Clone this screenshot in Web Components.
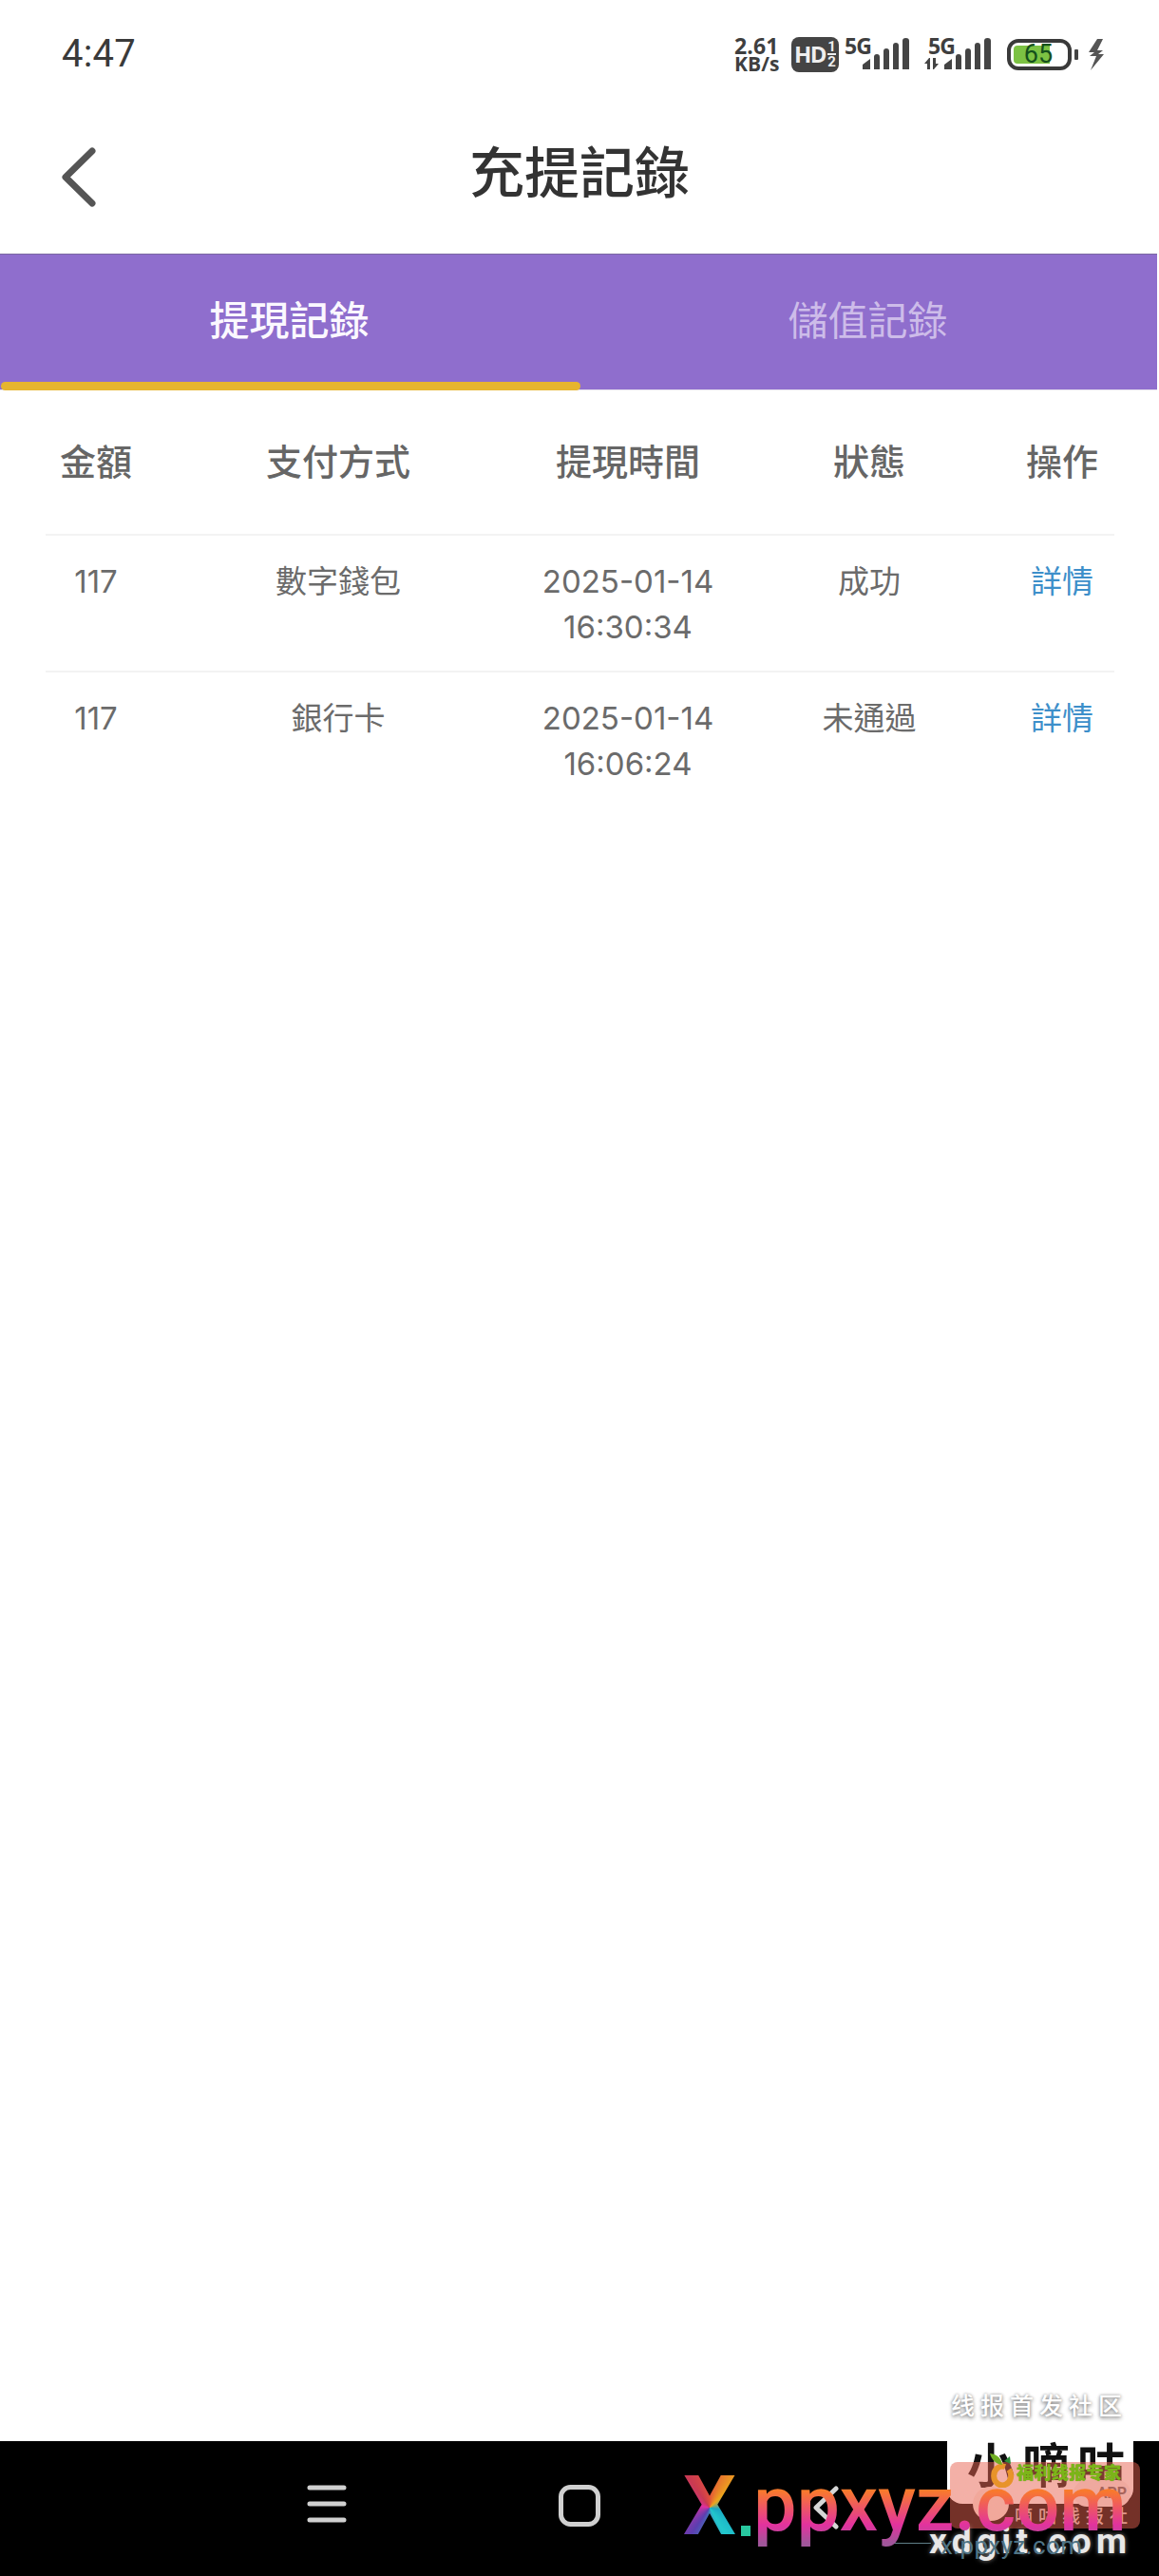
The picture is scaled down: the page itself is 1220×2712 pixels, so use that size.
<!DOCTYPE html>
<html lang="zh-Hant">
<head>
<meta charset="utf-8">
<title>充提記錄</title>
<style>
html,body{margin:0;padding:0;background:#fff;}
body{width:1220px;height:2712px;overflow:hidden;font-family:Roboto,"Noto Sans CJK TC",sans-serif;}
</style>
</head>
<body>
<app-shell>
  <status-bar slot="status" time="4:47"></status-bar>
  <app-header slot="header" title-text="充提記錄"></app-header>
  <tab-bar slot="tabs">
    <tab-item active>提現記錄</tab-item>
    <tab-item>儲值記錄</tab-item>
  </tab-bar>
  <record-table slot="main">
    <record-row header><span>金額</span><span>支付方式</span><span>提現時間</span><span>狀態</span><span>操作</span></record-row>
    <record-row><span>117</span><span>數字錢包</span><span>2025-01-14<br>16:30:34</span><span>成功</span><span data-link>詳情</span></record-row>
    <record-row><span>117</span><span>銀行卡</span><span>2025-01-14<br>16:06:24</span><span>未通過</span><span data-link>詳情</span></record-row>
  </record-table>
  <nav-bar slot="nav"></nav-bar>
  <water-mark slot="overlay"></water-mark>
</app-shell>
<script>
const FONT='Roboto,"Noto Sans CJK TC",sans-serif';
function def(name,html,init){
  customElements.define(name,class extends HTMLElement{
    constructor(){super();const s=this.attachShadow({mode:'open'});s.innerHTML=typeof html==='function'?html(this):html;}
    connectedCallback(){if(init)init(this);}
  });
}
def('app-shell',`<style>
:host{display:flex;flex-direction:column;position:relative;width:1220px;height:2712px;overflow:hidden;background:#fff;font-family:${FONT};}
.main{flex:1;min-height:0;}
</style>
<slot name="status"></slot><slot name="header"></slot><slot name="tabs"></slot>
<div class="main"><slot name="main"></slot></div>
<slot name="nav"></slot><slot name="overlay"></slot>`);

def('signal-icon',el=>`<style>
:host{display:block;position:relative;width:${el.hasAttribute('arrows')?71:69}px;height:36px;}
.g{position:absolute;left:${el.hasAttribute('arrows')?4:0}px;top:-3px;font:700 23px/24px "Open Sans",Roboto,sans-serif;color:#3f3f3f;letter-spacing:-.8px;}
svg{position:absolute;left:0;top:0;}
</style><span class="g">5G</span>
<svg width="${el.hasAttribute('arrows')?71:69}" height="36" viewBox="0 0 ${el.hasAttribute('arrows')?71:69} 36" fill="#444">
${el.hasAttribute('arrows')?
`<path d="M0 28l5-6 1 0 0 12h-3l0-6zM9 22h3l0 6 3 0-5 6h-1z"/>
<path d="M21 34l0-5 8-6 0 11zM33 34v-13q0-3 3-3t3 3v13zM43 34v-19q0-3 3-3t3 3v19zM53 34v-25q0-3 3-3t3 3v25zM63 34v-30q0-3 3.500-3t3.500 3v30z"/>`:
`<path d="M19 34l0-5 8-6 0 11zM31 34v-13q0-3 3-3t3 3v13zM41 34v-19q0-3 3-3t3 3v19zM51 34v-25q0-3 3-3t3 3v25zM61 34v-30q0-3 3.500-3t3.500 3v30z"/>`}
</svg>`);

def('battery-icon',`<style>
:host{display:flex;align-items:center;gap:3px;height:33px;}
.body{box-sizing:border-box;position:relative;width:68px;height:33px;border:4px solid #3a3a3a;border-radius:12px;padding:3px;display:flex;}
.fill{width:38px;background:#7cc243;border-radius:4px 0 0 4px;}
.num{position:absolute;left:13px;top:-3px;width:32px;text-align:center;font:400 27px/31px Roboto,sans-serif;color:#14501c;}
.nub{width:4px;height:11px;background:#444;border-radius:1px;}
</style><div class="body"><div class="fill"></div><span class="num">65</span></div><div class="nub"></div>`);

def('status-bar',el=>`<style>
:host{display:flex;align-items:center;justify-content:space-between;box-sizing:border-box;height:114px;padding:0 57px 0 65px;}
.time{font:400 40px/48px Roboto,sans-serif;color:#3a3a3a;letter-spacing:.2px;}
.right{display:flex;align-items:center;}
.speed{width:60px;font:700 21px/19px "Open Sans",Roboto,sans-serif;color:#3f3f3f;letter-spacing:.1px;margin-top:2px;}
.speed b{display:block;font-size:23px;font-weight:700;}
.hd{box-sizing:border-box;width:50px;height:37px;background:#444;border-radius:8px;color:#eee;display:flex;align-items:center;justify-content:center;gap:2px;margin-right:6px;}
.hd .t{font:700 24px/1 "Open Sans",Roboto,sans-serif;letter-spacing:-1.500px;}
.hd .f{display:flex;flex-direction:column;align-items:center;font:700 15px/14px Roboto,sans-serif;}
.hd .f i{display:block;width:9px;height:2px;background:#eee;}
signal-icon.a{margin-right:15px;}
signal-icon.b{margin-right:16px;}
battery-icon{margin-right:10px;}
.bolt{display:block;}
</style>
<span class="time">${el.getAttribute('time')}</span>
<div class="right">
  <div class="speed"><b>2.61</b>KB/s</div>
  <div class="hd"><span class="t">HD</span><span class="f"><span>1</span><i></i><span>2</span></span></div>
  <signal-icon class="a"></signal-icon>
  <signal-icon class="b" arrows></signal-icon>
  <battery-icon></battery-icon>
  <svg class="bolt" width="18" height="33" viewBox="0 0 18 33" fill="#555"><path d="M10 0 1 14l6 0-5 4 7 0-6 15L17 16l-6 0 5-4-6 0 6-12z"/></svg>
</div>`);

def('app-header',el=>`<style>
:host{display:flex;align-items:center;justify-content:center;position:relative;box-sizing:border-box;height:153px;padding-bottom:15px;}
.t{font:500 58px/70px ${FONT};color:#333;}
svg{position:absolute;left:64px;top:40px;}
</style>
<svg width="40" height="66" viewBox="0 0 40 66" fill="none" stroke="#555" stroke-width="7" stroke-linecap="round" stroke-linejoin="round"><path d="M33 5 5 32.500 33 60"/></svg>
<span class="t">${el.getAttribute('title-text')}</span>`);

def('tab-bar',`<style>
:host{display:flex;box-sizing:border-box;height:144px;background:#8f6ecd;border-top:1px solid #7a68a0;border-bottom:1px solid #e4e0ec;margin-right:2px;}
</style><slot></slot>`);

def('tab-item',el=>`<style>
:host{flex:1;display:flex;align-items:center;justify-content:center;position:relative;font:400 42px/56px ${FONT};color:#cdbce9;padding-bottom:1px;}
:host([active]){font-weight:500;color:#fbf8ff;}
:host([active])::after{content:"";position:absolute;left:1px;right:-2px;bottom:-1px;height:9px;background:#e6b52f;border-radius:5px;}
</style><slot></slot>`);

def('record-table',`<style>
:host{display:block;box-sizing:border-box;padding:0 47px 0 48px;}
</style><slot></slot>`);

def('record-row',el=>`<style>
:host{display:grid;grid-template-columns:106px 404px 206px 302px 104px;text-align:center;box-sizing:border-box;border-bottom:2px solid #f3f3f3;height:144px;padding-top:24px;font:400 32px/48px Inter,"Noto Sans CJK TC",sans-serif;color:#6b6b6b;}
:host(:not([header])) ::slotted(span){font-size:33px;}
:host([header]){height:153px;padding-top:52px;font:500 38px/48px ${FONT};color:#666;}
:host(:last-child){border-bottom:0;}
::slotted([data-link]){color:#3d8fca;}
</style><slot></slot>`);

def('nav-bar',`<style>
:host{display:flex;align-items:flex-start;box-sizing:border-box;height:142px;background:#000;padding:46px 0 0 323px;gap:223px;}
svg{display:block;}
</style>
<svg width="42" height="40" viewBox="0 0 42 40" stroke="#d0d0d0" stroke-width="5" stroke-linecap="round"><path d="M3 3h36M3 20h36M3 37h36"/></svg>
<svg width="44" height="44" viewBox="0 0 44 44" fill="none" stroke="#d0d0d0" stroke-width="5"><rect x="2.500" y="2.500" width="39" height="39" rx="10"/></svg>
<svg width="28" height="48" viewBox="0 0 28 48" fill="none" stroke="#d6d6d6" stroke-width="5" stroke-linecap="round" stroke-linejoin="round"><path d="M25 4 4 24l21 20"/></svg>`);

def('water-mark',`<style>
:host{position:absolute;left:0;top:0;width:1220px;height:2712px;pointer-events:none;overflow:hidden;}
div,span{position:absolute;white-space:nowrap;}
.top{left:1001px;top:2515px;font:500 25px/32px "Noto Sans CJK SC",sans-serif;letter-spacing:6px;color:#fff;text-shadow:0 2px 4px #888,0 0 3px #999;}
.box{left:997px;top:2570px;width:196px;height:66px;background:#fff;border-radius:0 0 16px 16px;}
.xdg{left:1018px;top:2562px;font:700 50px/60px "Noto Sans CJK SC",sans-serif;color:#111;letter-spacing:8px;}
.face{left:1024px;top:2618px;width:38px;height:36px;border-radius:50%;background:#fbeee6;}
.pill{left:1130px;top:2611px;width:60px;height:28px;border-radius:14px;background:#f6f0ef;color:#666;font:700 16px/28px Roboto,sans-serif;text-align:right;padding-right:4px;box-sizing:border-box;}
.sub{left:1068px;top:2636px;font:500 19px/24px "Noto Sans CJK SC",sans-serif;letter-spacing:6px;color:#d8c8c4;}
.pink{left:1000px;top:2592px;width:200px;height:70px;background:rgba(232,98,80,.5);border-radius:8px;}
.leaf{left:1040px;top:2583px;}
.green{left:1070px;top:2590px;font:900 18px/24px "Noto Sans CJK SC",sans-serif;color:#7cb518;letter-spacing:.4px;text-shadow:0 0 1px #5c9a10;}
.x{left:719px;top:2585px;font:700 88px/106px Roboto,sans-serif;color:transparent;-webkit-background-clip:text;background-clip:text;background-image:conic-gradient(from 0deg at 50% 52%,#e2503a 0deg,#eda61d 45deg,#19a6c4 100deg,#22c8cc 150deg,#5b3eb0 215deg,#e02fa0 280deg,#c93a52 325deg,#e2503a 360deg);}
.dot{left:780px;top:2659px;width:10px;height:11px;background:#28c79f;}
.pp{left:793px;top:2584px;height:106px;font:500 81px/106px Roboto,sans-serif;color:transparent;-webkit-background-clip:text;background-clip:text;background-image:linear-gradient(180deg,#f97a2c 0 36%,#e2329e 70%,#a0569a 88%);}
.rule{left:934px;top:2677px;width:46px;height:1px;background:#5f7f88;}
.big{left:978px;top:2654px;font:700 37px/44px Roboto,sans-serif;letter-spacing:5.300px;color:#e8e8e8;text-shadow:0 0 5px rgba(255,255,255,.5);}
.small{left:990px;top:2664px;font:400 26px/32px Roboto,sans-serif;color:#4f7486;letter-spacing:.4px;}
</style>
<span class="top">线报首发社区</span>
<div class="box"></div>
<span class="xdg">小嘀咕</span>
<div class="face"></div>
<span class="pill">APP</span>
<span class="sub">嘀咕线报社</span>
<div class="pink"></div>
<svg class="leaf" style="position:absolute" width="28" height="36" viewBox="0 0 28 36"><path d="M18 14a9 10 0 1 0 4 3" fill="none" stroke="#e8932a" stroke-width="6"/><path d="M2 0c8 1 12 5 13 12C8 11 4 7 2 0z" fill="#6fae22"/><path d="M17 8l6-5 1 8z" fill="#2f8f3a"/></svg>
<span class="green">福利线报专家</span>
<span class="big">xdgit.com</span>
<span class="small">x.ppxyz.com</span>
<div class="rule"></div>
<span class="x">X</span>
<div class="dot"></div>
<span class="pp">ppxyz.com</span>`);
</script>
</body>
</html>
